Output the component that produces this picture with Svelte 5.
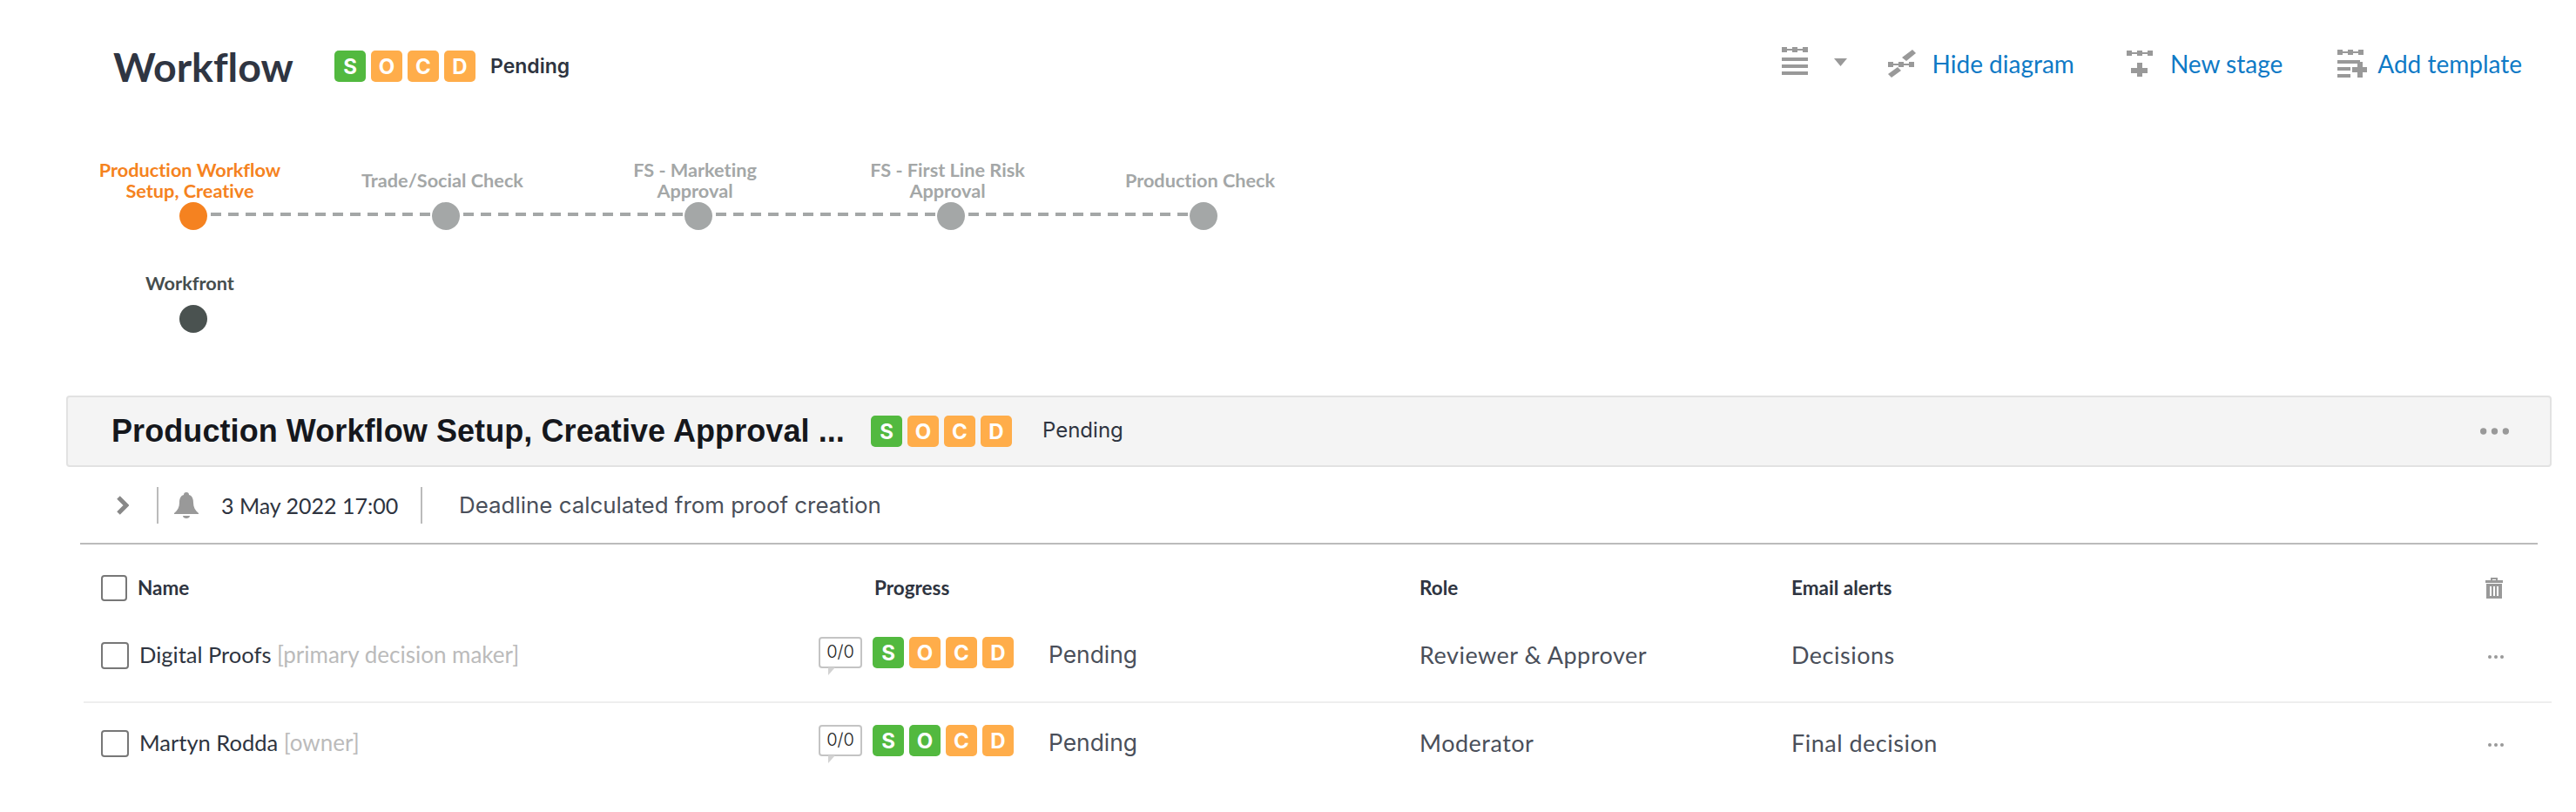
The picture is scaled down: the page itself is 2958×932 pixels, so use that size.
<script>
  const stages = [
    { lines: ['Production Workflow', 'Setup, Creative'], state: 'active' },
    { lines: ['Trade/Social Check'], state: 'todo' },
    { lines: ['FS - Marketing', 'Approval'], state: 'todo' },
    { lines: ['FS - First Line Risk', 'Approval'], state: 'todo' },
    { lines: ['Production Check'], state: 'todo' }
  ];

  const people = [
    { name: 'Digital Proofs', tag: '[primary decision maker]', done: 1, role: 'Reviewer & Approver', alerts: 'Decisions' },
    { name: 'Martyn Rodda', tag: '[owner]', done: 2, role: 'Moderator', alerts: 'Final decision' }
  ];
</script>

{#snippet socd(done)}
  <div class="socd">
    {#each ['S', 'O', 'C', 'D'] as letter, i}
      <span class="tile" class:green={i < done}>{letter}</span>
    {/each}
  </div>
{/snippet}

{#snippet dots()}
  <svg class="dots" viewBox="0 0 18 4"><circle cx="2" cy="2" r="2" /><circle cx="9" cy="2" r="2" /><circle cx="16" cy="2" r="2" /></svg>
{/snippet}

{#snippet nodes()}
  <path d="M0 0h6v6H0zM12 0h6v6h-6zM24 0h6v6h-6zM6 2h6v2H6zM18 2h6v2h-6z" />
{/snippet}

<div class="page">
  <header class="top">
    <h1>Workflow</h1>
    {@render socd(1)}
    <span class="top-status">Pending</span>

    <nav class="actions">
      <button class="tool view">
        <svg width="30" height="32" viewBox="0 0 30 32">
          {@render nodes()}
          <path d="M0 12h30v4H0zM0 20h30v4H0zM0 28h30v4H0z" />
        </svg>
        <svg class="caret" width="15" height="9" viewBox="0 0 15 9"><path d="M0 0h15L7.500 9z" /></svg>
      </button>
      <button class="tool hide">
        <svg width="32" height="32" viewBox="0 0 32 32">
          <g transform="translate(0 14)">{@render nodes()}</g>
          <path d="M16 9L28 0l4 4-11 9zM0 28l11-8 4 4-11 8z" />
        </svg>
        Hide diagram
      </button>
      <button class="tool stage">
        <svg width="30" height="30" viewBox="0 0 30 30">
          {@render nodes()}
          <path d="M12 14h6v6h6v6h-6v4h-6v-4H5v-6h7z" />
        </svg>
        New stage
      </button>
      <button class="tool template">
        <svg width="34" height="32" viewBox="0 0 34 32">
          {@render nodes()}
          <path d="M0 12h26v4H0zM0 20h15v4H0zM0 28h15v4H0z" />
          <path d="M23 14h6v6h5v6h-5v6h-6v-6h-6v-6h6z" />
        </svg>
        Add template
      </button>
    </nav>
  </header>

  <section class="diagram">
    <div class="lane">
      {#each stages as stage, i}
        <div class="stage-cell {stage.state}">
          <div class="label">
            {#each stage.lines as line}<span>{line}</span>{/each}
          </div>
          <div class="dot">
            {#if i < stages.length - 1}<i class="dash"></i>{/if}
          </div>
        </div>
      {/each}
    </div>
    <div class="lane second">
      <div class="stage-cell dark">
        <div class="label"><span>Workfront</span></div>
        <div class="dot"></div>
      </div>
    </div>
  </section>

  <section class="bar">
    <h2>Production Workflow Setup, Creative Approval ...</h2>
    {@render socd(1)}
    <span class="bar-status">Pending</span>
    <span class="bar-more">{@render dots()}</span>
  </section>

  <div class="deadline">
    <svg class="chevron" width="14" height="22" viewBox="0 0 14 22"><path d="M2 2l9 9-9 9" /></svg>
    <i class="rule"></i>
    <svg class="bell" width="28" height="30" viewBox="0 0 28 30">
      <path d="M14 0c2 0 3 1 3 3 4 1 5 5 5 9 0 5 2 9 6 12v1H0v-1c4-3 6-7 6-12 0-4 1-8 5-9 0-2 1-3 3-3z" />
      <path d="M10 27h8c0 2-2 3-4 3s-4-1-4-3z" />
    </svg>
    <span class="date">3 May 2022 17:00</span>
    <i class="rule"></i>
    <span class="note">Deadline calculated from proof creation</span>
  </div>

  <section class="table">
    <div class="row head">
      <div class="name-cell"><span class="check small"></span><b class="name-head">Name</b></div>
      <b class="progress-head">Progress</b>
      <b>Role</b>
      <b>Email alerts</b>
      <svg class="trash" width="20" height="24" viewBox="0 0 20 24">
        <path d="M6 3V0h8v3h6v3H0V3zM8 2v1h4V2z" fill-rule="evenodd" />
        <path d="M1 7h18v17H1zM5 10v11h2V10zM9 10v11h2V10zM13 10v11h2V10z" fill-rule="evenodd" />
      </svg>
    </div>

    {#each people as person}
      <div class="row person">
        <div class="name-cell">
          <span class="check"></span>
          <span class="who">{person.name} <em>{person.tag}</em></span>
        </div>
        <div class="progress-cell">
          <span class="bubble">0/0</span>
          {@render socd(person.done)}
          <span class="state">Pending</span>
        </div>
        <span class="plain">{person.role}</span>
        <span class="plain">{person.alerts}</span>
        <span class="row-more">{@render dots()}</span>
      </div>
    {/each}
  </section>
</div>

<style>
  :global(body) {
    margin: 0;
    background: #fff;
  }

  .page {
    width: 2958px;
    height: 932px;
    overflow: hidden;
    font-family: Lato, "Open Sans", sans-serif;
    font-variant-ligatures: none;
    color: #2e3440;
  }

  /* top header */
  .top {
    display: flex;
    align-items: center;
    height: 148px;
    padding: 4px 62px 0 130px;
    box-sizing: border-box;
  }

  h1 {
    width: 207px;
    margin: 0 47px 0 0;
    font-size: 46.500px;
    font-weight: 700;
    line-height: 1;
    color: #2f3542;
    white-space: nowrap;
  }

  .top-status {
    margin-left: 17px;
    font-family: Inter, sans-serif;
    font-size: 23px;
    font-weight: 600;
  }

  .actions {
    display: flex;
    align-items: center;
    margin-left: auto;
    margin-bottom: 7px;
  }

  .tool {
    display: flex;
    align-items: center;
    padding: 0;
    border: 0;
    background: none;
    font: inherit;
    font-size: 28px;
    color: #0f7ac6;
  }

  .tool svg {
    fill: #999;
  }

  .view svg:first-child {
    margin-top: -6px;
  }

  .caret {
    margin: -3px 0 0 30px;
  }

  .hide {
    margin-left: 47px;
    gap: 19px;
  }

  .stage {
    margin-left: 60px;
    gap: 20px;
  }

  .template {
    margin-left: 63px;
    gap: 12px;
  }

  /* stage diagram */
  .diagram {
    height: 306px;
    padding-top: 35px;
    padding-left: 73px;
    box-sizing: border-box;
  }

  .lane {
    display: grid;
    grid-template-columns: repeat(5, 290px);
  }

  .lane.second {
    margin-top: 43px;
  }

  .second .label {
    height: 36px;
    margin-bottom: 7px;
  }

  .stage-cell {
    display: flex;
    flex-direction: column;
    color: #a4a7a7;
  }

  .label {
    display: flex;
    flex-direction: column;
    justify-content: center;
    align-items: center;
    height: 48px;
    margin-bottom: 1px;
    font-size: 21.700px;
    font-weight: 700;
    line-height: 24px;
    color: inherit;
  }

  .dot {
    position: relative;
    width: 32px;
    height: 32px;
    margin-left: 133px;
    border-radius: 50%;
    background: #a4a7a7;
  }

  .dash {
    position: absolute;
    left: 36px;
    top: 12px;
    width: 252px;
    height: 4px;
    background: repeating-linear-gradient(90deg, #a4a7a7 0 12px, transparent 12px 20px);
  }

  .active {
    color: #f58220;
  }

  .active .dot {
    background: #f58220;
  }

  .dark {
    color: #454d4d;
  }

  .dark .dot {
    background: #4a5250;
  }

  /* SOCD tiles */
  .socd {
    display: flex;
    gap: 6px;
  }

  .tile {
    display: flex;
    align-items: center;
    justify-content: center;
    width: 36px;
    height: 36px;
    border-radius: 5px;
    background: #ffad4a;
    color: #fff;
    font-family: Inter, sans-serif;
    font-size: 24px;
    font-weight: 700;
  }

  .tile.green {
    background: #52b93f;
  }

  /* stage bar */
  .bar {
    display: flex;
    align-items: center;
    height: 82px;
    margin: 0 28px 0 76px;
    padding-left: 50px;
    box-sizing: border-box;
    border: 2px solid #e2e2e2;
    border-radius: 4px;
    background: #f4f4f4;
  }

  h2 {
    width: 872px;
    margin: 0;
    font-family: "Liberation Sans", Arial, sans-serif;
    font-size: 36px;
    font-weight: 700;
    letter-spacing: 0.080px;
    color: #15171c;
    white-space: nowrap;
  }

  .bar-status {
    margin-left: 35px;
    font-family: Inter, sans-serif;
    font-size: 24px;
    margin-top: -4px;
  }

  .bar-more {
    display: flex;
    margin-left: auto;
    margin-right: 47px;
  }

  .dots {
    display: block;
    fill: #999;
  }

  .bar-more .dots {
    width: 33px;
    height: 8px;
  }

  /* deadline row */
  .deadline {
    display: flex;
    align-items: center;
    height: 89px;
    margin: 0 44px 0 92px;
    border-bottom: 2px solid #bbb;
    box-sizing: border-box;
  }

  .chevron {
    margin-left: 42px;
    fill: none;
    stroke: #888;
    stroke-width: 5;
  }

  .rule {
    width: 2px;
    height: 42px;
    background: #bbb;
  }

  .deadline .rule:nth-of-type(1) {
    margin-left: 32px;
  }

  .bell {
    margin-left: 18px;
    fill: #999;
  }

  .date {
    width: 229px;
    margin-left: 26px;
    font-size: 25px;
  }

  .note {
    margin-left: 42px;
    font-family: Inter, sans-serif;
    font-size: 25.900px;
    color: #4a4f5a;
  }

  /* people table */
  .table {
    margin: 0 28px 0 96px;
  }

  .row {
    display: grid;
    grid-template-columns: 906px 628px 427px 1fr 76px;
    align-items: center;
  }

  .head {
    height: 82px;
    padding-top: 17px;
    box-sizing: border-box;
    font-size: 22.500px;
  }

  .head b {
    font-weight: 700;
  }

  .person {
    height: 100px;
    padding-bottom: 10px;
    border-bottom: 2px solid #eee;
    box-sizing: border-box;
  }

  .person:last-child {
    border-bottom: 0;
  }

  .name-cell {
    display: flex;
    align-items: center;
    padding-left: 20px;
  }

  .check {
    flex: none;
    width: 32px;
    height: 31px;
    box-sizing: border-box;
    border: 2px solid #777;
    border-radius: 4px;
  }

  .person .check {
    margin-top: 3px;
  }

  .check.small {
    width: 30px;
    height: 30px;
  }

  .name-head {
    margin-left: 12px;
  }

  .progress-head {
    margin-left: 2px;
  }

  .who {
    margin-left: 12px;
    font-size: 25.500px;
  }

  .who em {
    font-size: 26px;
    font-style: normal;
    color: #bbb;
  }

  .progress-cell {
    display: flex;
    align-items: center;
    margin: -4px 0 0 -62px;
  }

  .bubble {
    position: relative;
    display: flex;
    align-items: center;
    justify-content: center;
    width: 50px;
    height: 36px;
    margin-right: 12px;
    padding-bottom: 2px;
    box-sizing: border-box;
    border: 2px solid #c4c4c4;
    border-radius: 4px;
    font-family: Inter, sans-serif;
    font-size: 20px;
    font-weight: 300;
    color: #222;
  }

  .bubble::after {
    content: "";
    position: absolute;
    left: 9px;
    bottom: -10px;
    border-top: 9px solid #d2d2d2;
    border-right: 8px solid transparent;
  }

  .state {
    margin: 3px 0 0 40px;
    font-family: Inter, sans-serif;
    font-size: 26.400px;
    color: #4a4f5a;
  }

  .plain {
    font-size: 27px;
    letter-spacing: 0.500px;
    color: #4a4f5a;
  }

  .trash {
    fill: #999;
  }

  .row-more {
    display: flex;
  }

  .row-more .dots {
    width: 18px;
    height: 4px;
    margin: 6px 0 0 3px;
  }
</style>
